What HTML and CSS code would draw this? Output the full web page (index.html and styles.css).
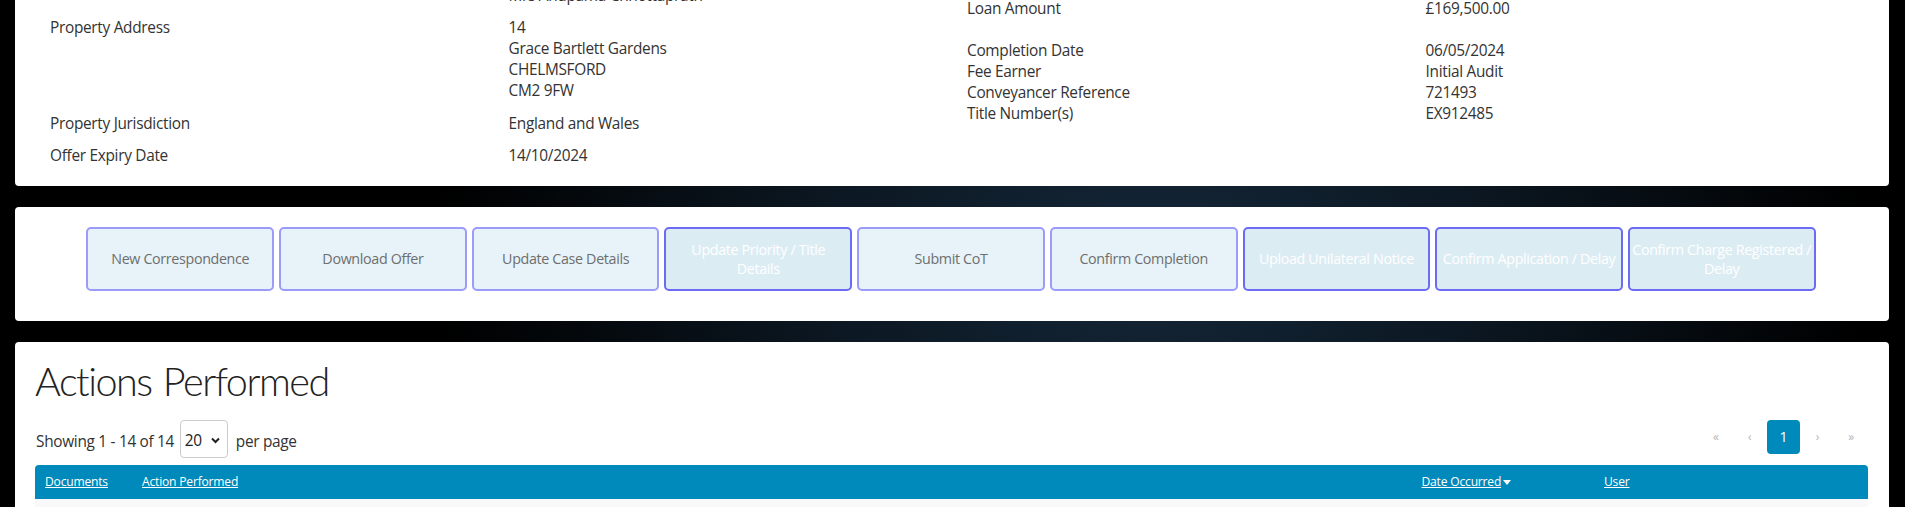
FILE: index.html
```html
<!DOCTYPE html>
<html lang="en">
<head>
<meta charset="utf-8">
<title>Case Details</title>
<link rel="stylesheet" href="styles.css">
</head>
<body>
<div class="page">
  <section class="card details">
    <div class="half left">
      <div class="drow"><div class="dl">Borrower(s)</div><div class="dv">Mr Anand Chhottaprath<br>Mrs Anupama Chhottaprath</div></div>
      <div class="drow"><div class="dl">Property Address</div><div class="dv">14<br>Grace Bartlett Gardens<br>CHELMSFORD<br>CM2 9FW</div></div>
      <div class="drow"><div class="dl">Property Jurisdiction</div><div class="dv">England and Wales</div></div>
      <div class="drow"><div class="dl">Offer Expiry Date</div><div class="dv">14/10/2024</div></div>
    </div>
    <div class="half right">
      <div class="drow"><div class="dl">Lender</div><div class="dv">Lender Name</div></div>
      <div class="drow"><div class="dl">Mortgage Account Number</div><div class="dv">0000000</div></div>
      <div class="drow"><div class="dl">Loan Amount</div><div class="dv">£169,500.00</div></div>
      <div class="drow"><div class="dl">&nbsp;</div><div class="dv">&nbsp;</div></div>
      <div class="drow"><div class="dl">Completion Date</div><div class="dv">06/05/2024</div></div>
      <div class="drow"><div class="dl">Fee Earner</div><div class="dv">Initial Audit</div></div>
      <div class="drow"><div class="dl">Conveyancer Reference</div><div class="dv">721493</div></div>
      <div class="drow"><div class="dl">Title Number(s)</div><div class="dv">EX912485</div></div>
    </div>
  </section>

  <section class="card actions">
    <a class="btn">New Correspondence</a>
    <a class="btn">Download Offer</a>
    <a class="btn">Update Case Details</a>
    <a class="btn dim">Update Priority / Title<br>Details</a>
    <a class="btn">Submit CoT</a>
    <a class="btn">Confirm Completion</a>
    <a class="btn dim">Upload Unilateral Notice</a>
    <a class="btn dim">Confirm Application / Delay</a>
    <a class="btn dim">Confirm Charge Registered / Delay</a>
  </section>

  <section class="card log">
    <h2 class="log-title">Actions Performed</h2>
    <div class="toolbar">
      <div class="showing">
        <span class="txt">Showing 1 - 14 of 14</span>
        <span class="select"><span>20</span><svg class="chev" width="9" height="7" viewBox="0 0 9 7"><path d="M1 1.5 L4.5 5 L8 1.5" fill="none" stroke="#222" stroke-width="2"/></svg></span>
        <span class="txt">per page</span>
      </div>
      <ul class="pager">
        <li><a>«</a></li>
        <li><a>‹</a></li>
        <li class="active"><a>1</a></li>
        <li><a>›</a></li>
        <li><a>»</a></li>
      </ul>
    </div>
    <table class="grid">
      <thead>
        <tr>
          <th class="c-doc"><a>Documents</a></th>
          <th class="c-act"><a>Action Performed</a></th>
          <th class="c-date"><a>Date Occurred</a> <svg class="caret" width="8" height="5" viewBox="0 0 8 5"><path d="M0 0 H8 L4 5 Z" fill="#fff"/></svg></th>
          <th class="c-user"><a>User</a></th>
        </tr>
      </thead>
      <tbody>
        <tr><td></td><td>Case Created</td><td>06/05/2024</td><td>System</td></tr>
      </tbody>
    </table>
  </section>
</div>
</body>
</html>
```
FILE: styles.css
```css
html, body {
  margin: 0;
  height: 100%;
}
body {
  background-color: #000;
  background-image: radial-gradient(ellipse 720px 420px at 1150px 260px, #15283a 0%, #0c1823 45%, #000 100%);
  font-family: "Open Sans", "Liberation Sans", sans-serif;
  font-size: 15.4px;
  line-height: 21px;
  letter-spacing: -0.3px;
  color: #333;
  overflow: hidden;
}
.page {
  padding: 0 16px 0 15px;
  display: flex;
  flex-direction: column;
  gap: 21px;
}
.card {
  background: #fff;
  border-radius: 4px;
}

/* details card */
.details {
  margin-top: -51px;
  padding: 15px 5px 20px 35px;
  display: grid;
  grid-template-columns: 1fr 1fr;
  align-items: start;
}
.half {
  display: flex;
  flex-direction: column;
}
.half.left {
  gap: 11.4px;
}
.half.right {
  margin-top: -8.3px;
}
.drow {
  display: grid;
  grid-template-columns: 1fr 1fr;
}

/* action buttons */
.actions {
  padding: 20px 2px 30.5px 0;
  display: flex;
  justify-content: center;
  gap: 5px;
}
.btn {
  width: 187.7px;
  height: 63.5px;
  box-sizing: border-box;
  border: 2px solid #9b9bfa;
  border-radius: 5px;
  background: #e7f3f8;
  color: #6e6e6e;
  font-size: 14.3px;
  line-height: 19px;
  letter-spacing: -0.35px;
  display: flex;
  align-items: center;
  justify-content: center;
  text-align: center;
  padding: 0;
}
.btn.dim {
  border-color: #6b6bf4;
  background: #dcecf3;
  color: #fff;
}

/* actions performed */
.log {
  padding: 17.2px 21px 0 20px;
  flex: 1;
}
.log-title {
  margin: 0;
  font-family: "Lato", "Open Sans", sans-serif;
  font-size: 39.6px;
  font-weight: 300;
  line-height: 1.1;
  letter-spacing: -1.5px;
  word-spacing: 2px;
  color: #222;
}
.toolbar {
  margin-top: 16.7px;
  display: flex;
  justify-content: space-between;
  align-items: flex-start;
}
.showing {
  display: flex;
  align-items: center;
  height: 38px;
  padding-left: 1px;
  color: #333;
}
.showing .txt {
  padding-top: 5px;
}
.select {
  width: 48.3px;
  height: 38px;
  box-sizing: border-box;
  border: 1px solid #ccc;
  border-radius: 4px;
  margin: 0 7.7px 0 5.7px;
  padding: 4px 7px 0 4px;
  display: flex;
  align-items: center;
  justify-content: space-between;
  color: #222;
}
.chev {
  display: block;
}
.pager {
  display: flex;
  list-style: none;
  margin: 0;
  padding: 0;
}
.pager a {
  width: 33.8px;
  height: 34.7px;
  display: flex;
  align-items: center;
  justify-content: center;
  color: #b5b5b5;
  font-size: 12px;
  border-radius: 4px;
}
.pager .active a {
  background: #0089bb;
  color: #fff;
  font-size: 14.3px;
}
.grid {
  margin-top: 7px;
  width: 100%;
  border-collapse: collapse;
  table-layout: fixed;
  font-size: 12.1px;
  letter-spacing: -0.2px;
}
.grid thead th {
  background: #0089bb;
  height: 34px;
  padding: 0 10px;
  text-align: left;
  font-weight: normal;
  color: #fff;
  white-space: nowrap;
}
.grid thead th:first-child { border-top-left-radius: 4px; }
.grid thead th:last-child { border-top-right-radius: 4px; }
.grid thead a {
  color: #fff;
  text-decoration: underline;
}
.caret {
  vertical-align: middle;
  margin-left: -1px;
}
.c-doc { width: 77px; }
.c-act { width: 1259.5px; }
.c-date { width: 162.5px; }
.grid tbody td {
  background: #f9f9f9;
  height: 40px;
  padding: 10px;
  color: #333;
}
```
